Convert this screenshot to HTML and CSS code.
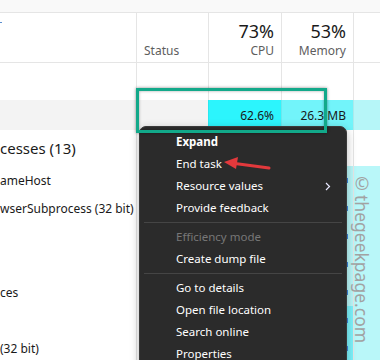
FILE: index.html
```html
<!DOCTYPE html>
<html>
<head>
<meta charset="utf-8">
<link rel="stylesheet" href="styles.css">
</head>
<body>
<div class="tm">
  <div class="topbar"></div>
  <div class="row head">
    <div class="cell"><span class="mark"></span></div>
    <div class="cell hcell left"><span class="lbl">Status</span></div>
    <div class="cell hcell"><span class="big">73%</span><span class="lbl">CPU</span></div>
    <div class="cell hcell"><span class="big">53%</span><span class="lbl">Memory</span></div>
    <div class="cell"></div>
  </div>
  <div class="row r1">
    <div class="cell"></div><div class="cell"></div><div class="cell"></div><div class="cell"></div><div class="cell"></div>
  </div>
  <div class="row sel">
    <div class="cell grey"></div>
    <div class="cell grey"></div>
    <div class="cell val cpu">62.6%</div>
    <div class="cell val mem">26.3 MB</div>
    <div class="cell ext"></div>
  </div>
  <div class="row title">
    <div class="cell ttl">cesses (13)</div>
    <div class="cell"></div><div class="cell"></div><div class="cell"></div><div class="cell"></div>
  </div>
  <div class="row proc">
    <div class="cell pname">ameHost</div><div class="cell"></div><div class="cell"></div>
    <div class="cell pm pale"><span class="tick"></span></div><div class="cell pale"></div>
  </div>
  <div class="row proc">
    <div class="cell pname">wserSubprocess (32 bit)</div><div class="cell"></div><div class="cell"></div>
    <div class="cell pm pale"><span class="tick"></span></div><div class="cell pale"></div>
  </div>
  <div class="row proc">
    <div class="cell pname"></div><div class="cell"></div><div class="cell"></div>
    <div class="cell pm pale"><span class="tick"></span></div><div class="cell pale"></div>
  </div>
  <div class="row proc">
    <div class="cell pname"></div><div class="cell"></div><div class="cell"></div>
    <div class="cell pm pale"><span class="tick"></span></div><div class="cell pale"></div>
  </div>
  <div class="row proc">
    <div class="cell pname">ces</div><div class="cell"></div><div class="cell"></div>
    <div class="cell pm pale"><span class="tick"></span></div><div class="cell pale"></div>
  </div>
  <div class="row proc">
    <div class="cell pname"></div><div class="cell"></div><div class="cell"></div>
    <div class="cell pm bright"><span class="tick"></span></div><div class="cell pale"></div>
  </div>
  <div class="row proc">
    <div class="cell pname">(32 bit)</div><div class="cell"></div><div class="cell"></div>
    <div class="cell pm bright"><span class="tick"></span></div><div class="cell pale"></div>
  </div>
</div>

<div class="menu">
  <div class="mi bold">Expand</div>
  <div class="mi">End task</div>
  <div class="mi sub"><span>Resource values</span><svg class="chev" width="6" height="9" viewBox="0 0 6 9"><path d="M1 1l3.5 3.5L1 8" fill="none" stroke="#e8e8ff" stroke-width="1.2"/></svg></div>
  <div class="mi">Provide feedback</div>
  <div class="sep"></div>
  <div class="mi dis">Efficiency mode</div>
  <div class="mi">Create dump file</div>
  <div class="sep"></div>
  <div class="mi">Go to details</div>
  <div class="mi">Open file location</div>
  <div class="mi">Search online</div>
  <div class="mi">Properties</div>
</div>

<div class="focus"></div>

<svg class="arrow" width="60" height="20" viewBox="0 0 60 20">
  <line x1="14" y1="8.5" x2="48" y2="13" stroke="#e2393c" stroke-width="3" stroke-linecap="round"/>
  <polygon points="3,7 17,2 15,14" fill="#e2393c"/>
</svg>

<div class="wm">©thegeekpage.com</div>
</body>
</html>
```

FILE: styles.css
```css
* { box-sizing: border-box; }
html, body { margin: 0; padding: 0; }
body {
  width: 380px;
  height: 360px;
  overflow: hidden;
  position: relative;
  background: #fff;
  font-family: "Noto Sans", "Open Sans", sans-serif;
  color: #1a1a1a;
}
.topbar {
  height: 13px;
  background: #f9f9f9;
  border-bottom: 1px solid #e5e5e5;
}
.row {
  display: grid;
  grid-template-columns: 136px 72px 73px 72px 27px;
}
.cell + .cell { border-left: 1px solid #e5e5e5; }
.head { height: 50px; border-bottom: 1px solid #e5e5e5; }
.mark {
  display: block;
  width: 2px;
  height: 1px;
  margin-top: 9px;
  background: #5b8fd0;
}
.hcell {
  display: flex;
  flex-direction: column;
  justify-content: flex-end;
  align-items: flex-end;
  padding: 0 7px 3px 0;
}
.hcell.left { align-items: flex-start; padding-left: 7px; }
.big { font-size: 18px; line-height: 22px; color: #1a1a1a; }
.lbl { font-size: 12px; line-height: 17px; color: #5d5d5d; }
.r1 { height: 37px; }
.sel { height: 30px; }
.grey { background: #f3f3f3; }
.val {
  display: flex;
  align-items: center;
  justify-content: flex-end;
  padding-right: 7px;
  font-size: 12px;
}
.sel .cell + .cell { border-left-color: rgba(0,0,0,0.05); }
.cpu { background: #2cf5fd; }
.mem { background: #72f4fa; }
.ext { background: #b6f6f8; }
.title { height: 36px; }
.ttl {
  font-size: 15px;
  padding-top: 8px;
  white-space: nowrap;
  color: #1a1a1a;
}
.proc { height: 28px; }
.pname {
  font-size: 12px;
  display: flex;
  align-items: center;
  padding-top: 1px;
  white-space: nowrap;
  overflow: hidden;
}
.pm {
  display: flex;
  align-items: center;
  justify-content: flex-end;
  padding-right: 5px;
}
.pale { background: #b9f7f9; }
.bright { background: #7cf2fb; }
.tick { width: 1px; height: 5px; background: #3a86e0; }

.menu {
  position: absolute;
  left: 139px;
  top: 126px;
  width: 208px;
  height: 260px;
  background: #2b2b2b;
  border: 1px solid #3a3a3a;
  border-radius: 7px;
  padding-top: 4px;
  box-shadow: 0 3px 10px rgba(0,0,0,0.28);
  color: #fff;
  font-size: 11.5px;
}
.mi {
  height: 22px;
  line-height: 22px;
  padding-left: 36px;
  padding-right: 15px;
  display: flex;
  justify-content: space-between;
  align-items: center;
  white-space: nowrap;
}
.bold { font-weight: 700; }
.dis { color: #777; }
.sep { height: 7px; display: flex; align-items: center; padding: 0 4px; }
.sep::before { content: ""; flex: 1; height: 1px; background: #454545; }
.focus {
  position: absolute;
  left: 136px;
  top: 88px;
  width: 191px;
  height: 45px;
  border: 3px solid #12a98a;
  box-shadow: 0 0 3px rgba(0,0,0,0.45), inset 0 0 3px rgba(0,0,0,0.35);
}
.arrow {
  position: absolute;
  left: 221px;
  top: 155px;
}
.wm {
  position: absolute;
  left: 354px;
  top: 171px;
  writing-mode: vertical-rl;
  font-size: 17.5px;
  line-height: 15px;
  color: #a2a2a2;
  white-space: nowrap;
}
```
